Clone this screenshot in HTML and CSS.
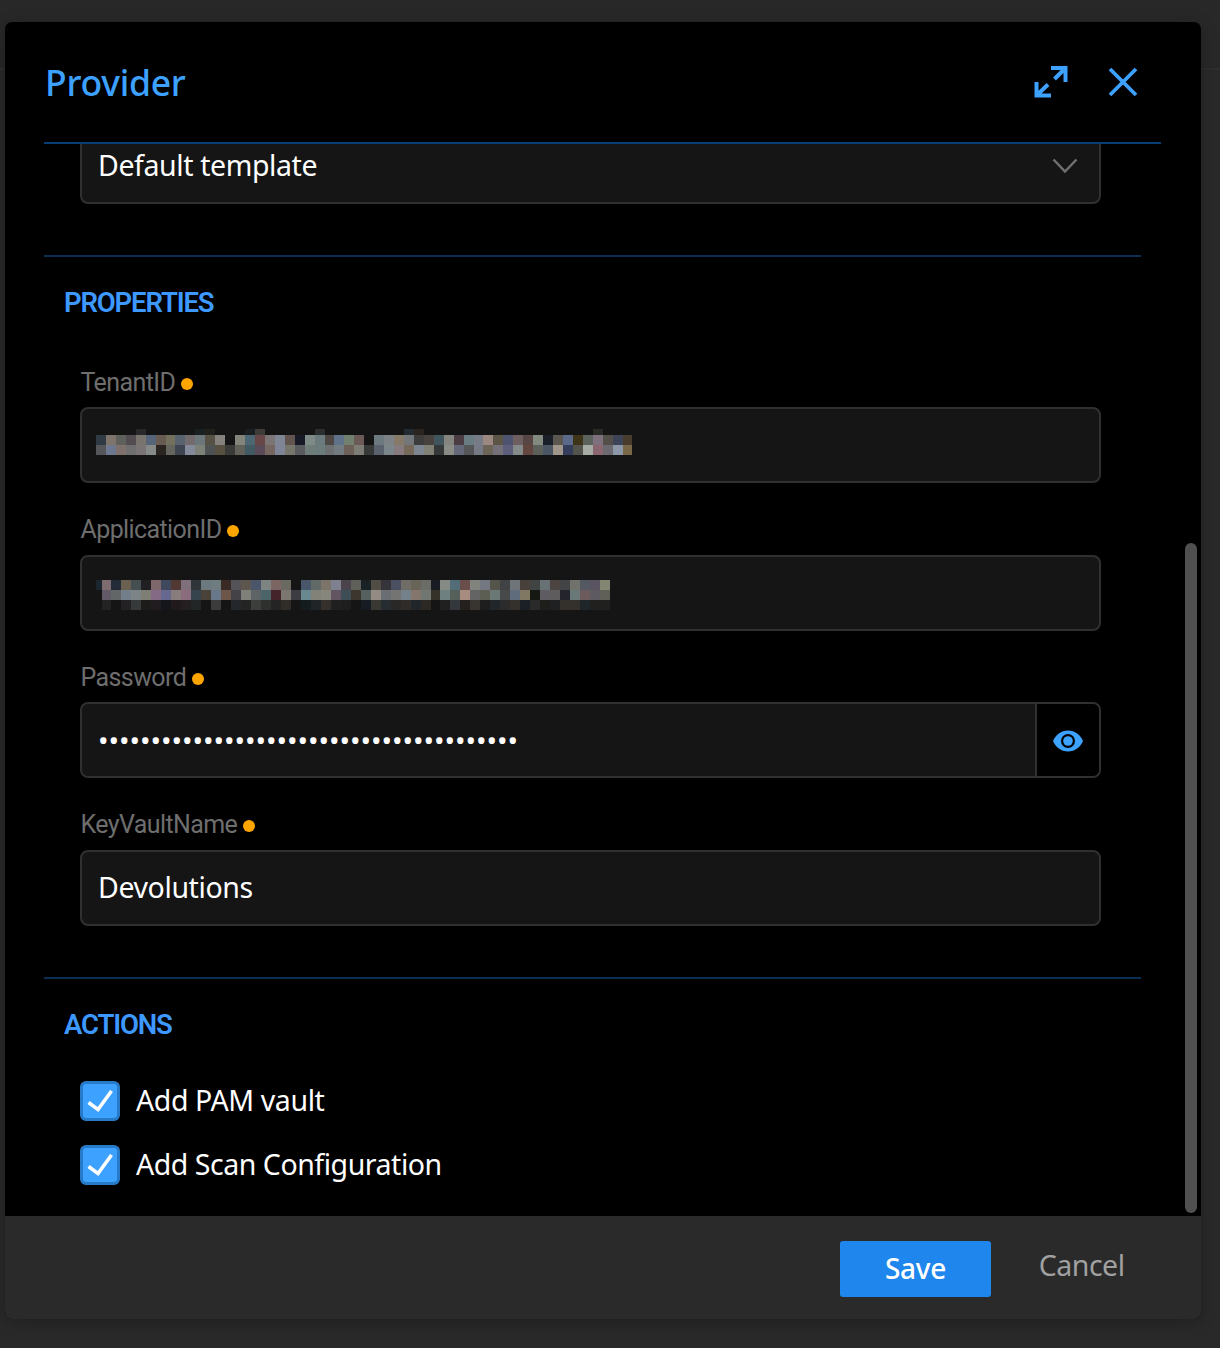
FILE: index.html
```html
<!DOCTYPE html>
<html lang="en">
<head>
<meta charset="utf-8">
<title>Provider</title>
<link rel="stylesheet" href="styles.css">
</head>
<body>
<div class="backdrop">
  <section class="modal" role="dialog" aria-labelledby="title">
    <header class="modal-header">
      <h1 id="title"><span>Provider</span></h1>
      <svg class="icon-expand" viewBox="0 0 34 34" width="34" height="34" fill="none" stroke="#3da1ff" stroke-width="4"><path d="M17 3H31.5V17M31 3.5L20.500 14M2.500 17V30.500H17M3 30L14 19.500"/></svg>
      <svg class="icon-close" viewBox="0 0 30 30" width="30" height="30" fill="none" stroke="#3da1ff" stroke-width="3.800"><path d="M2 2L28 28M28 2L2 28"/></svg>
    </header>
    <div class="modal-body">
      <div class="field select"><span class="value">Default template</span>
        <svg class="chevron" viewBox="0 0 26 16" width="26" height="16" fill="none" stroke="#707070" stroke-width="2.500"><path d="M1.500 1.500L13 13.500L24.500 1.500"/></svg>
      </div>
      <section class="group properties">
        <h2><span>PROPERTIES</span></h2>
        <div class="row"><label><span>TenantID</span><i class="dot"></i></label>
          <div class="field"><svg class="mosaic tenant" data-mask="tenant" width="540" height="26"></svg></div></div>
        <div class="row"><label><span>ApplicationID</span><i class="dot"></i></label>
          <div class="field"><svg class="mosaic app" data-mask="application" width="515" height="31"></svg></div></div>
        <div class="row"><label><span>Password</span><i class="dot"></i></label>
          <div class="field with-button"><span class="password">••••••••••••••••••••••••••••••••••••••••</span>
            <button class="reveal" aria-label="Show password"><svg viewBox="0 0 30 22" width="30" height="22"><path fill="#3da1ff" d="M15 0.500C8 0.500 2.600 5 0 11C2.600 17 8 21.500 15 21.500S27.400 17 30 11C27.400 5 22 0.500 15 0.500Z"/><circle cx="15" cy="11" r="7" fill="#000"/><circle cx="15" cy="11" r="4.800" fill="#3da1ff"/></svg></button></div></div>
        <div class="row"><label><span>KeyVaultName</span><i class="dot"></i></label>
          <div class="field"><span class="value">Devolutions</span></div></div>
      </section>
      <section class="group actions">
        <h2><span>ACTIONS</span></h2>
        <div class="check"><span class="box"><svg viewBox="0 0 26 22" width="26" height="22" fill="none" stroke="#fff" stroke-width="3.500"><path d="M1.500 12.500L11 19.500L24.500 1"/></svg></span><span class="value">Add PAM vault</span></div>
        <div class="check"><span class="box"><svg viewBox="0 0 26 22" width="26" height="22" fill="none" stroke="#fff" stroke-width="3.500"><path d="M1.500 12.500L11 19.500L24.500 1"/></svg></span><span class="value scan">Add Scan Configuration</span></div>
      </section>
      <div class="scrollbar"></div>
    </div>
    <footer class="modal-footer">
      <button class="save"><span>Save</span></button>
      <button class="cancel"><span>Cancel</span></button>
    </footer>
  </section>
</div>
<script src="mosaic.js"></script>
</body>
</html>
```
FILE: styles.css
```css
* { box-sizing: border-box; }
body { margin: 0; background: #282828; font-family: "Noto Sans", "Open Sans", sans-serif; color: #fff; }
h1, h2 { margin: 0; font-weight: 500; }
button { border: 0; padding: 0; margin: 0; font: inherit; background: none; }
span { white-space: nowrap; }
svg { display: block; flex: none; }

.backdrop { height: 1348px; padding: 22px 0 0 4.500px; overflow: hidden; background: linear-gradient(#282828 68px, #2e2e2e 68px, #2e2e2e 70px, #292929 70px); }
.modal { width: 1196px; height: 1297px; display: flex; flex-direction: column; background: #000; border-radius: 7px; overflow: hidden; box-shadow: 0 3px 16px rgba(0,0,0,.24); }

.modal-header { flex: none; height: 122px; margin: 0 40px 0 39.500px; border-bottom: 2px solid #063f75; display: flex; align-items: center; padding-right: 22.500px; }
.modal-header h1 { flex: 1; font-size: 35.500px; line-height: 48px; letter-spacing: -.25px; color: #3da1ff; padding-left: 1px; }
.icon-expand { margin-right: 40px; }

.modal-body { flex: 1; min-height: 0; position: relative; overflow: hidden; padding-left: 39.500px; }
.field { height: 76px; width: 1021px; border: 2px solid #303030; border-radius: 8px; background: #151515; display: flex; align-items: center; padding-left: 16px; }
.select { margin: -16px 0 0 36px; justify-content: space-between; padding-right: 21px; }
.value { font-size: 28.500px; line-height: 38px; letter-spacing: -.4px; }
.field .value { margin-top: -2px; }
.chevron { margin-top: -1px; }

.group { width: 1097px; border-top: 2px solid #0b2f50; }
.properties { margin-top: 51px; height: 722px; }
.group h2 { padding: 28px 0 0 20px; height: 93px; font-family: Roboto, sans-serif; font-size: 27.500px; line-height: 36px; font-weight: 600; letter-spacing: -1.150px; color: #3d98ff; }
.row { margin-left: 36px; height: 147.500px; }
.row label { display: flex; align-items: center; height: 57px; padding: 8px 0 0 .5px; font-family: Roboto, sans-serif; font-size: 25px; line-height: 32px; letter-spacing: -.6px; color: #6e6e6e; }
.dot { width: 12px; height: 12px; margin: 2px 0 0 6px; border-radius: 50%; background: #ffa500; }
.mosaic { margin-left: -2px; }
.mosaic.tenant { margin-top: -6px; }
.mosaic.app { margin-top: 5px; }
.with-button { justify-content: space-between; }
.password { font-size: 28px; line-height: 38px; letter-spacing: -.030px; }
.reveal { width: 64px; height: 72px; border-left: 2px solid #303030; border-radius: 0 6px 6px 0; background: #000; display: grid; place-items: center; padding-top: 1px; }

.actions h2 { height: 102px; }
.check { display: flex; align-items: center; height: 40px; margin: 0 0 24px 36px; }
.check .value { margin-top: -3px; }
.scan { letter-spacing: -.46px; }
.box { width: 40px; height: 40px; margin-right: 16px; border: 3px solid #277ac8; border-radius: 6px; background: #3da1ff; display: grid; place-items: center; }

.scrollbar { position: absolute; right: 4px; top: 399px; width: 12px; height: 670px; border-radius: 6px; background: #505050; }

.modal-footer { flex: none; height: 103px; background: #2a2a2a; display: flex; padding: 24.500px 76px 0 0; justify-content: flex-end; }
.save { width: 151.500px; height: 56px; margin-right: 47.500px; padding-bottom: 2px; border-radius: 3px; background: #1f86ee; color: #fff; font-size: 28px; font-weight: 500; letter-spacing: -.3px; }
.cancel { height: 49px; color: #a0a0a0; font-size: 28.500px; letter-spacing: -.5px; }
```
FILE: mosaic.js
```javascript
// Colour cells of the masked identifiers, one string per band.
const masks = {
  tenant: { step: 9.935, x: 0, rows: [
    [0, 6, ". . . . 2a282b . . . . . 1a2022 22201c . . . 1a2022 403c38 . . . . . 2a2e2e . . . . . . . . 232a30 2a231e . . . . . . . . . . . . . . . . . 292926"],
    [6, 10, "2f3a45 7f746c 5f5f5c 524c50 7a746e 56647a 685c52 74705e 59636f 716b6e 6b777b 565145 85827e . 84857a 4c6672 684648 7b7576 7f8594 62544e 171a26 7d8a85 6b7a7c 4e4844 60728a 72806f 6c5a59 . 6c7a80 7d8287 857a68 747779 3c3c3c 48423f 40565c 858580 4b3b42 687c82 777b86 9c8880 5c5546 4e5470 6e5e60 574644 838a80 1a1f28 5c5650 5a6a88 3e3418 5b635c 7e707c 525048 3e4458 483c2c"],
    [16, 10, "555659 6c7790 7e706c 6f6f6f 7a7476 868a88 29241f 66655d 3f4550 858a9a 7d8279 4e5252 565040 3a3a39 62625b 415962 5a4a58 75675f 7f8596 77766c 5a5b5f 6e7c7a 6c7c7c 6c7072 727c80 6c6058 7d7c75 353a38 5a626e 7a8689 867a7e 75695a 7c8590 808074 353838 8a8c86 646878 545658 757a85 6c6456 757078 5c5e7c 858a8a 62463f 5c6058 4a5664 a0968a 343e5c 52544c a6aca4 8a6670 6c6a70 8c98a8 786848"]
  ] },
  application: { step: 9.97, x: 5.5, rows: [
    [0, 10, "7e6c70 232c36 6a6050 454f52 202022 7e686c 40485e 523832 80707c 2f3538 6c7a80 6f7c80 3a2a26 545458 5c564e 4c566a 7e8481 7c6664 6a6a62 . 48586a 626a68 7c7468 7e8290 4c444c 60605a 1a2226 504c46 34343a 4a5060 706c66 686458 6c6c66 1a1c24 858a84 526c78 6a4e4c 80837e 737882 54544a 404244 6e7478 48403a 404442 687274 4c4440 434446 72726c 545860 5a5460 848674"],
    [10, 10, "625a66 626666 727e8a 7c8488 7e7e74 846a84 666890 887c7c 8a6c7c 36444e 484238 68788a 6c564a 444246 80807a 5e6466 4a6468 44242a 7c7670 3c3c42 6a8890 828278 86867c 625460 3e4c54 3c362e 56605e 948c84 6a6e72 747472 74808a 84766c 727672 35322a 6e8080 56605a a88c80 646464 5c5e54 6c7876 484a4a 5e6c7c 807862 161814 5e5c60 5e5c5c 24242c 6a7878 6c5a5c 5e5a62 606058"],
    [20, 10, "232323 . 232124 363a3a 1e1c1a 201c20 15151c 201a1c 231e20 232626 . 3c3c3c . 24282c 242424 3c3e3c 2e302e 242424 302c28 . 151c1e 202426 35302c 202020 1e1e1e . 161c22 3a3832 262c30 2a2826 302c2a 20262a 2c2824 . 202020 34383c 24201e 38342f 1e1e1e 20262a 2c2c2c 34302c 1a2026 2a2a2a 1e1e1a 1e2022 34302c 34302c 1e262a 22201e 20201e"]
  ] }
};
function cell(svg, x, y, w, h, color) {
  const r = document.createElementNS("http://www.w3.org/2000/svg", "rect");
  const left = Math.round(x), right = Math.round(x + w);
  for (const [k, v] of Object.entries({ x: left, y, width: right - left, height: h, fill: "#" + color })) r.setAttribute(k, v);
  svg.appendChild(r);
}
document.querySelectorAll("[data-mask]").forEach(svg => {
  const mask = masks[svg.dataset.mask];
  if (mask.x) cell(svg, 0, 0, mask.x, 10, "1c262e");
  mask.rows.forEach(([y, h, colors]) => colors.split(" ").forEach((c, i) => {
    if (c !== ".") cell(svg, mask.x + i * mask.step, y, mask.step, h, c);
  }));
});
```
